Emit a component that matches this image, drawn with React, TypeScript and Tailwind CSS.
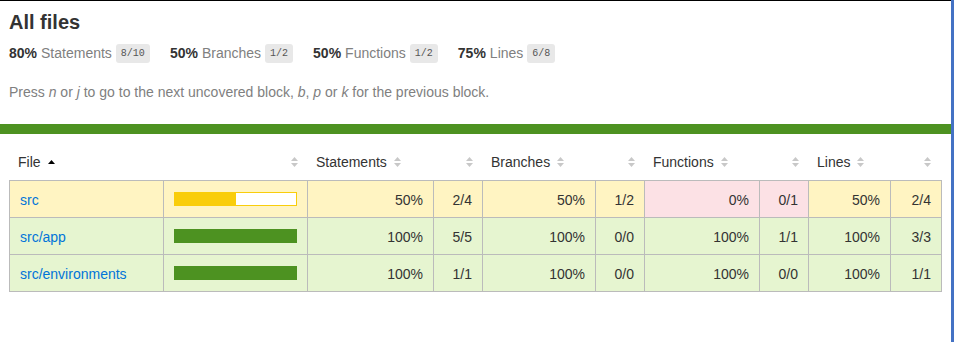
import React from "react";

type Level = "high" | "medium" | "low";

const rowBg: Record<Level, string> = {
  high: "bg-[#e6f5d0]",
  medium: "bg-[#fff4c2]",
  low: "bg-[#fce1e5]",
};

const COLS =
  "grid grid-cols-[154px_144px_126px_49px_113px_49px_115px_49px_82px_50px]";

function Sorter() {
  return (
    <svg width="7" height="10" viewBox="0 0 7 10" className="inline-block align-baseline">
      <polygon points="3.5,0 7,4 0,4" fill="#c8c8c8" />
      <polygon points="0,6 7,6 3.5,10" fill="#c8c8c8" />
    </svg>
  );
}

function SortAsc() {
  return (
    <svg width="7" height="10" viewBox="0 0 7 10" className="inline-block align-baseline">
      <polygon points="3.5,3 7,7 0,7" fill="#000" />
    </svg>
  );
}

type Cell = { pct: string; frac: string; level: Level };
type Row = {
  file: string;
  level: Level;
  fill: "half" | "full";
  cells: Cell[];
};

const rows: Row[] = [
  {
    file: "src",
    level: "medium",
    fill: "half",
    cells: [
      { pct: "50%", frac: "2/4", level: "medium" },
      { pct: "50%", frac: "1/2", level: "medium" },
      { pct: "0%", frac: "0/1", level: "low" },
      { pct: "50%", frac: "2/4", level: "medium" },
    ],
  },
  {
    file: "src/app",
    level: "high",
    fill: "full",
    cells: [
      { pct: "100%", frac: "5/5", level: "high" },
      { pct: "100%", frac: "0/0", level: "high" },
      { pct: "100%", frac: "1/1", level: "high" },
      { pct: "100%", frac: "3/3", level: "high" },
    ],
  },
  {
    file: "src/environments",
    level: "high",
    fill: "full",
    cells: [
      { pct: "100%", frac: "1/1", level: "high" },
      { pct: "100%", frac: "0/0", level: "high" },
      { pct: "100%", frac: "0/0", level: "high" },
      { pct: "100%", frac: "1/1", level: "high" },
    ],
  },
];

function Stat({ pct, label, frac }: { pct: string; label: string; frac: string }) {
  return (
    <div className="flex items-center h-[19px] mr-[20px]">
      <span className="font-bold text-[#333] leading-4 mb-[2px]">{pct}</span>
      <span className="ml-[4px] text-[#808080] leading-4 mb-[2px]">{label}</span>
      <span
        className="ml-[4px] h-[19px] px-[5px] flex items-center rounded-[3px] bg-[#e8e8e8] text-[#555] text-[10px] leading-none"
        style={{ fontFamily: '"Liberation Mono", monospace' }}
      >
        {frac}
      </span>
    </div>
  );
}

export default function App() {
  const headerCell = "pl-[8px] pr-[10px] pt-[10px] h-[36px] leading-4 whitespace-nowrap";
  return (
    <div
      className="w-[954px] h-[342px] flex bg-white overflow-hidden text-[14px] text-[#333]"
      style={{ fontFamily: '"Liberation Sans", Arial, sans-serif' }}
    >
      <div className="flex-1 border-t border-black flex flex-col">
        <div className="pl-[9px] pt-[10px]">
          <h1 className="text-[20px] font-bold leading-[23px] text-[#333]">All files</h1>
          <div className="flex mt-[10px]">
            <Stat pct="80%" label="Statements" frac="8/10" />
            <Stat pct="50%" label="Branches" frac="1/2" />
            <Stat pct="50%" label="Functions" frac="1/2" />
            <Stat pct="75%" label="Lines" frac="6/8" />
          </div>
          <p className="mt-[21px] leading-4 text-[#808080]">
            Press <em>n</em> or <em>j</em> to go to the next uncovered block, <em>b</em>,{" "}
            <em>p</em> or <em>k</em> for the previous block.
          </p>
        </div>
        <div className="mt-[24px] h-[10px] bg-[#4d9221]" />

        <div className="mt-[10px] ml-[10px]">
          <div className={COLS}>
            <div className={headerCell}>
              File<span className="ml-[7px]"><SortAsc /></span>
            </div>
            <div className={headerCell + " text-right"}>
              <Sorter />
            </div>
            {["Statements", "Branches", "Functions", "Lines"].map((h) => (
              <React.Fragment key={h}>
                <div className={headerCell}>
                  {h}
                  <span className="ml-[7px]"><Sorter /></span>
                </div>
                <div className={headerCell + " text-right"}>
                  <Sorter />
                </div>
              </React.Fragment>
            ))}
          </div>
        </div>

        <div className="ml-[9px] w-[933px] border border-[#bbb]">
          {rows.map((r, i) => (
            <div
              key={r.file}
              className={
                COLS + (i < rows.length - 1 ? " border-b border-[#bbb]" : "")
              }
            >
              <div
                className={
                  "h-[36px] px-[10px] pt-[11px] leading-4 border-r border-[#bbb] whitespace-nowrap " +
                  rowBg[r.level]
                }
              >
                <a className="text-[#0074d9]">{r.file}</a>
              </div>
              <div
                className={
                  "h-[36px] px-[10px] flex items-center border-r border-[#bbb] " + rowBg[r.level]
                }
              >
                <div
                  className={
                    "w-full h-[14px] flex border bg-white " +
                    (r.fill === "half" ? "border-[#f9cd0b]" : "border-[#4d9221]")
                  }
                >
                  <div
                    className={
                      "h-full " +
                      (r.fill === "half" ? "w-1/2 bg-[#f9cd0b]" : "w-full bg-[#4d9221]")
                    }
                  />
                </div>
              </div>
              {r.cells.map((c, j) => (
                <React.Fragment key={j}>
                  <div
                    className={
                      "h-[36px] px-[10px] pt-[11px] leading-4 text-right border-r border-[#bbb] " +
                      rowBg[c.level]
                    }
                  >
                    {c.pct}
                  </div>
                  <div
                    className={
                      "h-[36px] px-[10px] pt-[11px] leading-4 text-right " +
                      (j < 3 ? "border-r border-[#bbb] " : "") +
                      rowBg[c.level]
                    }
                  >
                    {c.frac}
                  </div>
                </React.Fragment>
              ))}
            </div>
          ))}
        </div>
      </div>
      <div className="w-[3px] bg-[#4472c4]" />
    </div>
  );
}
